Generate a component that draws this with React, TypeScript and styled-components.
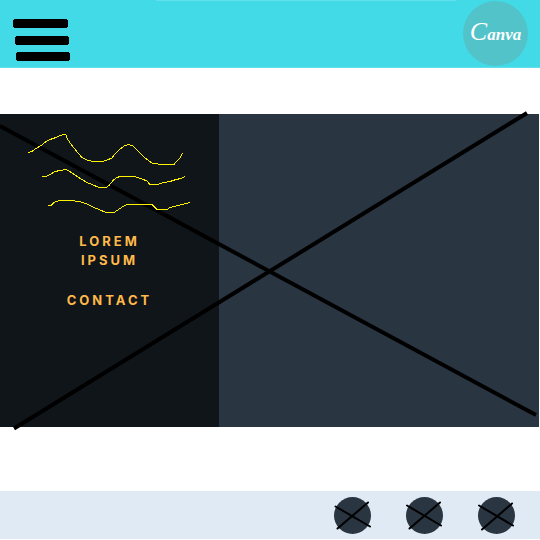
import React from "react";
import styled, { createGlobalStyle } from "styled-components";

const GlobalStyle = createGlobalStyle`
  *, *::before, *::after { box-sizing: border-box; }
  body { margin: 0; background: #ffffff; font-family: Inter, "Liberation Sans", sans-serif; }
`;

const Header = styled.header`
  display: flex;
  justify-content: space-between;
  align-items: flex-start;
  height: 68px;
  padding: 1px 12px 0;
  background: linear-gradient(#62e0ec, #62e0ec) 156px 0 / 300px 1px no-repeat #43dae8;
  border-bottom: 1px solid #62dfeb;
`;

const MenuButton = styled.button`
  display: block;
  margin-top: 17px;
  padding: 0;
  border: 0;
  background: none;
  cursor: pointer;

  svg { display: block; }
`;

const Logo = styled.a`
  display: flex;
  align-items: center;
  justify-content: center;
  width: 65px;
  height: 65px;
  border-radius: 50%;
  background: #51c3c9;
  color: #ffffff;
  text-decoration: none;
`;

const LogoText = styled.span`
  display: block;
  font: italic 700 17px/24px "Liberation Serif", serif;

  &::first-letter { font-size: 26px; font-weight: 400; }
`;

const Hero = styled.main`
  position: relative;
  display: flex;
  margin: 46px 1px 64px 0;
  min-height: 313px;
  background: #293541;
`;

const HeroCross = styled.svg`
  position: absolute;
  inset: 0;
  width: 100%;
  height: 100%;
  overflow: visible;
  pointer-events: none;
`;

const Sidebar = styled.aside`
  display: flex;
  flex-direction: column;
  align-items: center;
  width: 219px;
  padding-top: 18px;
  background: #0f1519;
`;

const Waves = styled.svg`
  position: relative;
  z-index: 1;
  display: block;
`;

const SideNav = styled.nav`
  position: relative;
  z-index: 1;
  display: flex;
  flex-direction: column;
  align-items: center;
  gap: 21px;
  margin-top: 16px;
`;

const SideLink = styled.a`
  max-width: 100px;
  color: #ffb94a;
  font: 700 13px/19px Inter, sans-serif;
  letter-spacing: 3px;
  text-align: center;
  text-decoration: none;
`;

const Footer = styled.footer`
  display: flex;
  justify-content: flex-end;
  gap: 35px;
  padding: 6px 25px 5px;
  margin-bottom: 1px;
  background: #e0eaf4;
`;

const RoundButton = styled.button`
  width: 37px;
  height: 37px;
  padding: 0;
  border: 0;
  border-radius: 50%;
  background: #293541;
  cursor: pointer;

  svg { display: block; overflow: visible; }
`;

const crosses = [
  { name: "First link", d: "M1.500 9.500 36 29.500M3.500 31.500 34 5.500" },
  { name: "Second link", d: "M1 8.500 35 28.500M3.500 31.500 34 5.500" },
  { name: "Third link", d: "M1 8.500 35 28.500M4 32.500 34 6.500" },
];

export default function App() {
  return (
    <>
      <GlobalStyle />
      <Header>
        <MenuButton type="button" aria-label="Menu">
          <svg width="60" height="44" viewBox="0 0 60 44" shapeRendering="crispEdges">
            <rect x="1" y="1" width="55" height="9" rx="3" />
            <rect x="3" y="18" width="54" height="9" rx="3" />
            <rect x="4" y="34" width="54" height="9" rx="3" />
          </svg>
        </MenuButton>
        <Logo href="#">
          <LogoText>Canva</LogoText>
        </Logo>
      </Header>
      <Hero>
        <HeroCross viewBox="0 0 539 313" preserveAspectRatio="none" aria-hidden="true">
          <path d="M0 12 536 301M14 314.500 527 -1" stroke="#000000" strokeWidth="4" fill="none" />
        </HeroCross>
        <Sidebar>
          <Waves
            width="165"
            height="84"
            viewBox="27 132 165 84"
            fill="none"
            stroke="#fff200"
            shapeRendering="crispEdges"
            aria-hidden="true"
          >
            <path d="M28 152.500L32 151.500 36 148.500 42 145 46 141.500 50 139.500 56 137.500 60 135.500 64 134.500 66 135 67 138 70 143 74 148 78 153 82 157.500 87 160 93 161.500H102L106 160.500 112 158 115 154 120 149 125 145.500 129 144.500 133 146 138 151 144 157 149 161 153 163.500 163 164.500H174L176 162 180 158 182.500 153" />
            <path d="M42 176.500H46L50 174.500 55 171.500 60 170.500 66 169.500 69 171 75 175 81 179 87 182.500 93 185 99 187.500H106L109 185.500 113 180.500 117 177.500 120 176.500H134L141 178.500 147 181 150 184.500H157L162 183 170 181.500 176 179.500 181 178.500 185 176.500" />
            <path d="M48 205.500H51L54 202.500 59 200.500H72L81 202 88 204.500 94 207.500 100 210 106 212.500H114L117 210.500 123 206.500 127 204.500H152L157 209.500H167L170 207.500 178 205.500 190 202.500" />
          </Waves>
          <SideNav>
            <SideLink href="#">LOREM IPSUM</SideLink>
            <SideLink href="#">CONTACT</SideLink>
          </SideNav>
        </Sidebar>
      </Hero>
      <Footer>
        {crosses.map((cross) => (
          <RoundButton key={cross.name} type="button" aria-label={cross.name}>
            <svg width="37" height="37" viewBox="0 0 37 37">
              <path d={cross.d} stroke="#000000" strokeWidth="2" strokeLinecap="round" fill="none" />
            </svg>
          </RoundButton>
        ))}
      </Footer>
    </>
  );
}
